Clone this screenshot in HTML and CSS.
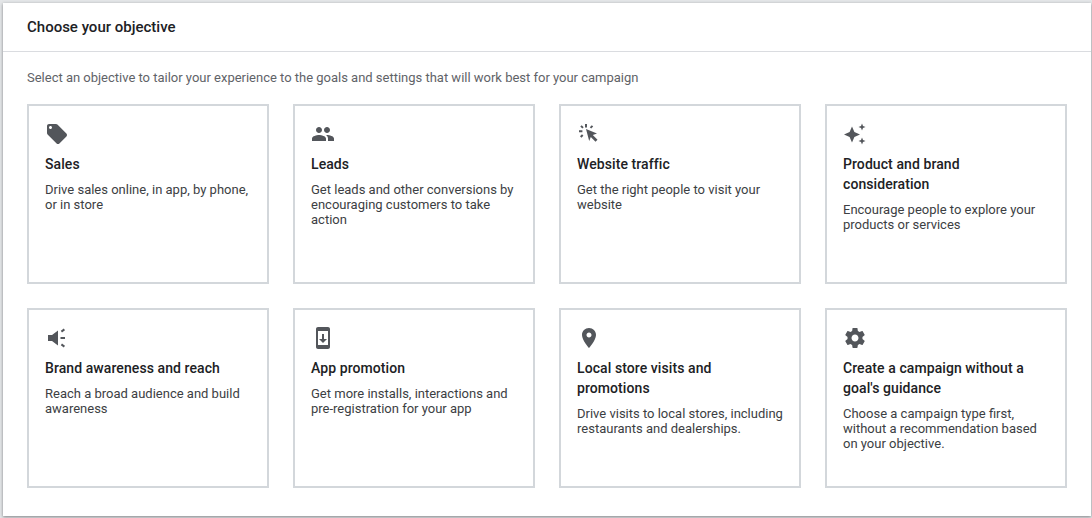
FILE: index.html
```html
<!DOCTYPE html>
<html lang="en">
<head>
    <meta charset="UTF-8">
    <title>Choose your objective</title>
    <link rel="stylesheet" href="styles.css">
</head>
<body>
    <div class="panel">
        <div class="panel-header">Choose your objective</div>
        <div class="panel-body">
            <p class="intro">Select an objective to tailor your experience to the goals and settings that will work best for your campaign</p>
            <div class="cards">
                <div class="card">
                    <svg class="icon" viewBox="0 0 24 24"><path d="M21.41 11.58l-9-9C12.05 2.22 11.55 2 11 2H4c-1.1 0-2 .9-2 2v7c0 .55.22 1.05.59 1.42l9 9c.36.36.86.58 1.41.58.55 0 1.05-.22 1.41-.59l7-7c.37-.36.59-.86.59-1.41 0-.55-.23-1.06-.59-1.42zM5.5 7C4.67 7 4 6.33 4 5.5S4.67 4 5.5 4 7 4.67 7 5.5 6.33 7 5.5 7z"/></svg>
                    <h3>Sales</h3>
                    <p>Drive sales online, in app, by phone, or in store</p>
                </div>
                <div class="card">
                    <svg class="icon" viewBox="0 0 24 24"><path d="M16 11c1.66 0 2.99-1.34 2.99-3S17.66 5 16 5c-1.66 0-3 1.34-3 3s1.34 3 3 3zm-8 0c1.66 0 2.99-1.34 2.99-3S9.66 5 8 5C6.34 5 5 6.34 5 8s1.34 3 3 3zm0 2c-2.33 0-7 1.17-7 3.5V19h14v-2.5c0-2.33-4.67-3.5-7-3.5zm8 0c-.29 0-.62.02-.97.05 1.16.84 1.97 1.97 1.97 3.45V19h6v-2.5c0-2.33-4.67-3.5-7-3.5z"/></svg>
                    <h3>Leads</h3>
                    <p>Get leads and other conversions by encouraging customers to take action</p>
                </div>
                <div class="card">
                    <svg class="icon" viewBox="0 0 24 24"><path d="M9 7l11 4.4-4.2 1.7 4.7 4.7-2 2-4.7-4.7L12.2 19z"/><path d="M8 2h2v3.4H8zM2 8.2h3.4v2H2zM3.3 4.6l1.4-1.4 2 2-1.4 1.4zM12.8 5.2l2-2 1.4 1.4-2 2zM5 12.3l1.4 1.4-2 2L3 14.3z"/></svg>
                    <h3>Website traffic</h3>
                    <p>Get the right people to visit your website</p>
                </div>
                <div class="card">
                    <svg class="icon" viewBox="0 0 24 24"><path d="M9 4.500l2.400 5.600L17 12.500l-5.600 2.400L9 20.500l-2.400-5.600L1 12.500l5.600-2.400z"/><path d="M19 1.500l1 2.500 2.500 1-2.500 1-1 2.500-1-2.500-2.500-1 2.500-1zM19 15.500l1 2.500 2.500 1-2.500 1-1 2.500-1-2.500-2.500-1 2.500-1z"/></svg>
                    <h3>Product and brand consideration</h3>
                    <p>Encourage people to explore your products or services</p>
                </div>
                <div class="card">
                    <svg class="icon" viewBox="0 0 24 24"><path d="M3 9h4l6-4.500v15L7 15H3z"/><path d="M15.500 11h4.500v2h-4.500zM15.800 4.800l3-2.200 1.200 1.600-3 2.200zM15.800 19.200l1.200-1.600 3 2.200-1.200 1.600z"/></svg>
                    <h3>Brand awareness and reach</h3>
                    <p>Reach a broad audience and build awareness</p>
                </div>
                <div class="card">
                    <svg class="icon" viewBox="0 0 24 24"><path d="M17 1.010L7 1c-1.100 0-2 .9-2 2v18c0 1.100.9 2 2 2h10c1.100 0 2-.9 2-2V3c0-1.100-.9-1.990-2-1.990zM17 19H7V5h10v14zm-1-6h-3V8h-2v5H8l4 4 4-4z"/></svg>
                    <h3>App promotion</h3>
                    <p>Get more installs, interactions and pre-registration for your app</p>
                </div>
                <div class="card">
                    <svg class="icon" viewBox="0 0 24 24"><path d="M12 2C8.130 2 5 5.130 5 9c0 5.250 7 13 7 13s7-7.750 7-13c0-3.870-3.130-7-7-7zm0 9.500c-1.380 0-2.500-1.120-2.500-2.500s1.120-2.500 2.500-2.500 2.500 1.120 2.500 2.500-1.120 2.500-2.500 2.500z"/></svg>
                    <h3>Local store visits and promotions</h3>
                    <p>Drive visits to local stores, including restaurants and dealerships.</p>
                </div>
                <div class="card">
                    <svg class="icon" viewBox="0 0 24 24"><path d="M19.430 12.980c.04-.32.07-.64.07-.98s-.03-.66-.07-.98l2.110-1.650c.19-.15.24-.42.12-.64l-2-3.460c-.12-.22-.39-.3-.61-.22l-2.490 1c-.52-.4-1.080-.73-1.690-.98l-.38-2.650C14.460 2.180 14.250 2 14 2h-4c-.25 0-.46.18-.49.42l-.38 2.650c-.61.25-1.170.59-1.690.98l-2.490-1c-.23-.09-.49 0-.61.22l-2 3.460c-.13.22-.07.49.12.64l2.110 1.650c-.04.32-.07.65-.07.98s.03.66.07.98l-2.110 1.650c-.19.15-.24.42-.12.64l2 3.460c.12.22.39.3.61.22l2.490-1c.52.4 1.080.73 1.690.98l.38 2.650c.03.24.24.42.49.42h4c.25 0 .46-.18.49-.42l.38-2.650c.61-.25 1.170-.59 1.690-.98l2.490 1c.23.09.49 0 .61-.22l2-3.460c.12-.22.07-.49-.12-.64l-2.110-1.650zM12 15.500c-1.930 0-3.500-1.570-3.500-3.500s1.570-3.500 3.500-3.500 3.500 1.570 3.500 3.500-1.570 3.500-3.500 3.500z"/></svg>
                    <h3>Create a campaign without a goal's guidance</h3>
                    <p>Choose a campaign type first, without a recommendation based on your objective.</p>
                </div>
            </div>
        </div>
    </div>
</body>
</html>
```

FILE: styles.css
```css
* {
    margin: 0;
    padding: 0;
    box-sizing: border-box;
}

body {
    height: 518px;
    padding: 3px 1px 2px 3px;
    background-color: #e4e6e8;
    font-family: Roboto, "Liberation Sans", sans-serif;
    overflow: hidden;
}

.panel {
    height: 513px;
    background-color: #fff;
    box-shadow: 0 1px 3px rgba(60, 64, 67, 0.6);
}

.panel-header {
    height: 49px;
    padding: 0 24px;
    display: flex;
    align-items: center;
    border-bottom: 1px solid #dadce0;
    font-size: 15px;
    font-weight: 500;
    color: #202124;
}

.panel-body {
    padding: 17px 24px 0;
}

.intro {
    font-size: 13px;
    line-height: 18px;
    letter-spacing: -0.01px;
    color: #5f6368;
    margin-bottom: 17px;
}

.cards {
    display: grid;
    grid-template-columns: repeat(4, 242px);
    grid-auto-rows: 180px;
    gap: 24px;
}

.card {
    border: 2px solid #d3d7db;
    padding: 16px 16px 0;
}

.icon {
    display: block;
    width: 24px;
    height: 24px;
    fill: #53565b;
}

.card h3 {
    margin-top: 8px;
    font-size: 14px;
    font-weight: 500;
    line-height: 20px;
    letter-spacing: 0.08px;
    color: #202124;
}

.card p {
    margin-top: 8px;
    font-size: 13px;
    line-height: 15px;
    color: #3c4043;
}
```
